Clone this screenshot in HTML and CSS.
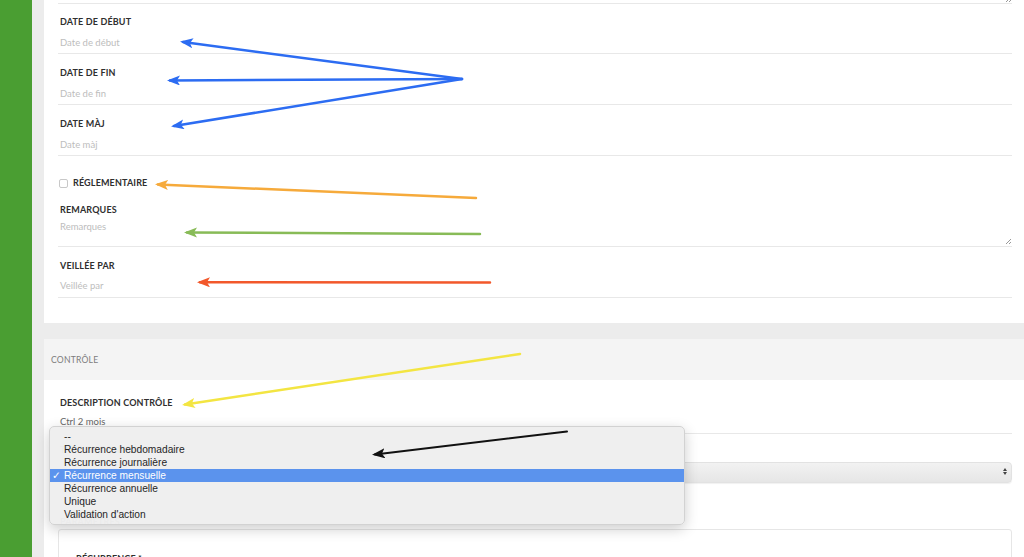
FILE: index.html
```html
<!DOCTYPE html>
<html lang="fr">
<head>
<meta charset="utf-8">
<title>Formulaire</title>
<link rel="stylesheet" href="styles.css">
</head>
<body>
<div class="app">
  <aside class="sidebar"></aside>
  <main class="main">
    <section class="card card-top">
      <div class="ta-end">
        <svg class="grip grip-top" width="7" height="7" viewBox="0 0 7 7"><path d="M1 6 L6 1 M4 6 L6 4" stroke="#999" stroke-width="1"/></svg>
      </div>
      <div class="field field-first">
        <div class="label">DATE DE DÉBUT</div>
        <div class="input ph">Date de début</div>
      </div>
      <div class="field">
        <div class="label">DATE DE FIN</div>
        <div class="input ph">Date de fin</div>
      </div>
      <div class="field">
        <div class="label">DATE MÀJ</div>
        <div class="input ph">Date màj</div>
      </div>
      <div class="check-row">
        <span class="checkbox"></span>
        <span class="label">RÉGLEMENTAIRE</span>
      </div>
      <div class="field field-ta">
        <div class="label">REMARQUES</div>
        <div class="input textarea ph">Remarques
          <svg class="grip grip-ta" width="7" height="7" viewBox="0 0 7 7"><path d="M1 6 L6 1 M4 6 L6 4" stroke="#999" stroke-width="1"/></svg>
        </div>
      </div>
      <div class="field field-vp">
        <div class="label">VEILLÉE PAR</div>
        <div class="input ph">Veillée par</div>
      </div>
    </section>
    <section class="card card-ctrl">
      <div class="card-head">CONTRÔLE</div>
      <div class="card-body">
        <div class="field field-desc">
          <div class="label">DESCRIPTION CONTRÔLE</div>
          <div class="input val">Ctrl 2 mois</div>
        </div>
        <div class="field-select">
          <div class="label">TYPE DE CONTRÔLE</div>
          <div class="select"><span class="arrows"><span class="up"></span><span class="down"></span></span></div>
        </div>
        <div class="label label-sub">PARAMÈTRES</div>
        <div class="box">
          <div class="label">RÉCURRENCE <span class="req">*</span></div>
        </div>
      </div>
    </section>
  </main>
</div>

<div class="menu">
  <div class="item">--</div>
  <div class="item">Récurrence hebdomadaire</div>
  <div class="item">Récurrence journalière</div>
  <div class="item selected"><span class="check">✓</span>Récurrence mensuelle</div>
  <div class="item">Récurrence annuelle</div>
  <div class="item">Unique</div>
  <div class="item">Validation d'action</div>
</div>

<svg class="annot" width="1024" height="557" viewBox="0 0 1024 557">
  <defs>
    <marker id="hb" markerUnits="userSpaceOnUse" markerWidth="14" markerHeight="12" refX="10" refY="5" orient="auto"><path d="M0 0 L13 5 L0 10 L3 5 Z" fill="#2c6cf2"/></marker>
    <marker id="ho" markerUnits="userSpaceOnUse" markerWidth="14" markerHeight="12" refX="10" refY="5" orient="auto"><path d="M0 0 L13 5 L0 10 L3 5 Z" fill="#f6aa3b"/></marker>
    <marker id="hg" markerUnits="userSpaceOnUse" markerWidth="14" markerHeight="12" refX="10" refY="5" orient="auto"><path d="M0 0 L13 5 L0 10 L3 5 Z" fill="#88bb57"/></marker>
    <marker id="hr" markerUnits="userSpaceOnUse" markerWidth="14" markerHeight="12" refX="10" refY="5" orient="auto"><path d="M0 0 L13 5 L0 10 L3 5 Z" fill="#f2582b"/></marker>
    <marker id="hy" markerUnits="userSpaceOnUse" markerWidth="14" markerHeight="12" refX="10" refY="5" orient="auto"><path d="M0 0 L13 5 L0 10 L3 5 Z" fill="#f3e542"/></marker>
    <marker id="hk" markerUnits="userSpaceOnUse" markerWidth="14" markerHeight="12" refX="10" refY="5" orient="auto"><path d="M0 0 L13 5 L0 10 L3 5 Z" fill="#111"/></marker>
  </defs>
  <g fill="none" stroke-linecap="round">
    <line x1="462" y1="79" x2="183" y2="42" stroke="#2c6cf2" stroke-width="2.5" marker-end="url(#hb)"/>
    <line x1="462" y1="79" x2="170" y2="80.5" stroke="#2c6cf2" stroke-width="2.5" marker-end="url(#hb)"/>
    <line x1="462" y1="79" x2="174" y2="126" stroke="#2c6cf2" stroke-width="2.5" marker-end="url(#hb)"/>
    <line x1="476" y1="198" x2="158" y2="184.5" stroke="#f6aa3b" stroke-width="2.5" marker-end="url(#ho)"/>
    <line x1="480" y1="234" x2="187" y2="232.5" stroke="#88bb57" stroke-width="2.5" marker-end="url(#hg)"/>
    <line x1="490" y1="282.5" x2="200" y2="282.3" stroke="#f2582b" stroke-width="2.5" marker-end="url(#hr)"/>
    <line x1="520" y1="354" x2="185" y2="404.5" stroke="#f3e542" stroke-width="2.5" marker-end="url(#hy)"/>
    <line x1="567" y1="431.5" x2="375" y2="454.5" stroke="#111" stroke-width="2" marker-end="url(#hk)"/>
  </g>
</svg>
</body>
</html>
```

FILE: styles.css
```css
* { box-sizing: border-box; }
html, body {
  margin: 0;
  padding: 0;
  width: 1024px;
  height: 557px;
  overflow: hidden;
  background: #ececec;
  font-family: "Lato", "Liberation Sans", sans-serif;
}
.app {
  display: flex;
  height: 557px;
}
.sidebar {
  width: 32px;
  flex: none;
  background: #4a9e32;
}
.main {
  flex: 1;
  padding-left: 12px;
  display: flex;
  flex-direction: column;
  gap: 16px;
  background: #ececec;
}
.card {
  background: #fff;
}
.card-top {
  padding: 0 12px 25px 14px;
}
.ta-end {
  position: relative;
  height: 4px;
  border-bottom: 1px solid #e8e8e8;
}
.grip {
  position: absolute;
  right: 0;
}
.grip-top { top: -4px; }
.label {
  font-size: 9px;
  line-height: 12px;
  font-weight: 700;
  color: #2f2f2f;
  letter-spacing: 0.15px;
  padding-left: 2px;
}
.field {
  padding-top: 13px;
}
.field-first { padding-top: 12px; }
.input {
  position: relative;
  font-size: 9.5px;
  line-height: 12px;
  padding: 9px 0 4px 2px;
  border-bottom: 1px solid #e8e8e8;
}
.ph { color: #bdbdbd; }
.val { color: #666; }
.check-row {
  padding-top: 21px;
  display: flex;
  align-items: center;
  gap: 5px;
}
.checkbox {
  width: 9px;
  height: 9px;
  margin-left: 1px;
  border: 1px solid #c8c8c8;
  border-radius: 2px;
  background: #fff;
}
.check-row .label { padding-left: 0; }
.field-ta { padding-top: 15px; }
.textarea {
  padding: 5px 0 13px 2px;
}
.grip-ta { bottom: 1px; }
.field-vp .input { padding: 8px 0 5px 2px; }

.card-ctrl { flex: 1; }
.card-head {
  height: 41px;
  background: #f4f4f4;
  padding-left: 7px;
  display: flex;
  align-items: center;
  font-size: 8.6px;
  letter-spacing: 0.2px;
  color: #7d7d7d;
}
.card-body {
  padding: 0 12px 0 14px;
}
.field-desc { padding-top: 17px; }
.field-desc .input { padding: 7px 0 5px 2px; }
.field-select { padding-top: 10px; }
.select {
  position: relative;
  margin-top: 6px;
  height: 21px;
  border-radius: 4px;
  background: linear-gradient(#f2f2f2, #e6e6e6);
  border: 1px solid #e2e2e2;
  box-shadow: 0 1px 1px rgba(0,0,0,0.06);
}
.arrows {
  position: absolute;
  right: 4px;
  top: 5px;
  display: flex;
  flex-direction: column;
  gap: 1px;
}
.up, .down {
  width: 0;
  height: 0;
  border-left: 2.5px solid transparent;
  border-right: 2.5px solid transparent;
}
.up { border-bottom: 3.5px solid #444; }
.down { border-top: 3.5px solid #444; }
.label-sub {
  margin-top: 33px;
}
.box {
  margin-top: 1px;
  height: 60px;
  border: 1px solid #e6e6e6;
  border-radius: 3px;
  padding: 23px 0 0 15px;
}
.req { font-weight: 700; }

.menu {
  position: absolute;
  left: 49px;
  top: 426px;
  width: 636px;
  height: 99px;
  padding: 3px 0;
  background: rgba(239,239,239,0.98);
  border: 1px solid #d2d2d2;
  border-radius: 5px;
  box-shadow: 0 4px 14px rgba(0,0,0,0.2);
  font-family: "Liberation Sans", Arial, sans-serif;
  font-size: 10.2px;
  color: #262626;
}
.item {
  position: relative;
  height: 13px;
  line-height: 13px;
  padding-left: 14px;
}
.item.selected {
  background: #5b93ed;
  color: #fff;
}
.check {
  position: absolute;
  left: 2px;
  top: 0;
  font-size: 10.5px;
  font-family: "DejaVu Sans", sans-serif;
}
.annot {
  position: absolute;
  left: 0;
  top: 0;
  pointer-events: none;
}
```
